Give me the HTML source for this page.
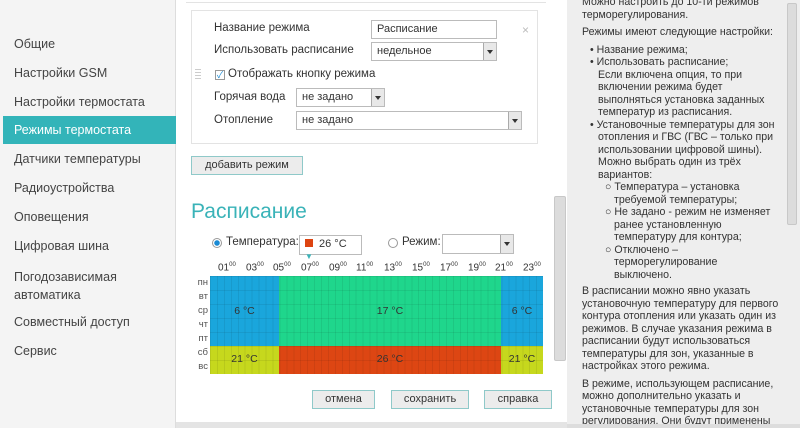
<!DOCTYPE html>
<html><head><meta charset="utf-8"><style>
*{box-sizing:border-box;margin:0;padding:0}
body{width:800px;height:428px;overflow:hidden;background:#fff;font-family:"Liberation Sans","Noto Sans CJK SC",sans-serif;color:#333;position:relative}
.nav{position:absolute;left:0;top:0;width:176px;height:428px;background:#f4f4f4;border-right:1px solid #ddd}
.nav div{position:absolute;left:14px;font-size:12.5px;color:#444}
.nav .act{left:3px;width:173px;height:28px;background:#33b4b9;color:#fff;padding:7px 11px}
.card{position:absolute;left:191px;top:10px;width:347px;height:134px;border:1px solid #e3e3e3;background:#fff}
.lbl{position:absolute;font-size:11.5px;color:#333}
.inp{position:absolute;border:1px solid #bbb;background:#fff;font-size:11px;padding:2px 5px;height:19px}
.dd{position:absolute;right:0;top:0;width:13px;height:17px;background:#e8e8e8;border-left:1px solid #aaa}
.dd:after{content:"";position:absolute;left:3px;top:7px;border:3px solid transparent;border-top:4px solid #333}
.btn{position:absolute;height:19px;border:1px solid #8fc9c9;background:#ececec;font-size:11px;text-align:center;line-height:17px;color:#333}
.side{position:absolute;left:567px;top:0;width:233px;height:428px;background:#eeeeee;font-size:10.6px;line-height:12.5px;color:#333;padding:0 0 0 15px;overflow:hidden}
.side p{margin:0 0 5px}
.cell{position:absolute;font-size:10.5px;text-align:center;color:#333}
</style></head><body>
<div class="nav">
<div style="top:37px">Общие</div>
<div style="top:66px">Настройки GSM</div>
<div style="top:95px">Настройки термостата</div>
<div class="act" style="top:116px">Режимы термостата</div>
<div style="top:152px">Датчики температуры</div>
<div style="top:181px">Радиоустройства</div>
<div style="top:210px">Оповещения</div>
<div style="top:239px">Цифровая шина</div>
<div style="top:268px;line-height:18px">Погодозависимая<br>автоматика</div>
<div style="top:315px">Совместный доступ</div>
<div style="top:344px">Сервис</div>
</div>
<div style="position:absolute;left:186px;top:0;width:360px;height:3px;border-bottom:1px solid #e3e3e3"></div>
<div class="card">
<div class="lbl" style="left:22px;top:11px">Название режима</div>
<div class="inp" style="left:179px;top:9px;width:126px">Расписание</div>
<div style="position:absolute;left:330px;top:12px;color:#bbb;font-size:12px">×</div>
<div class="lbl" style="left:22px;top:33px">Использовать расписание</div>
<div class="inp" style="left:179px;top:31px;width:126px">недельное<span class="dd"></span></div>
<div style="position:absolute;left:3px;top:58px;width:6px;height:12px;background:repeating-linear-gradient(#ccc 0 1px,transparent 1px 3px)"></div>
<div style="position:absolute;left:23px;top:59px;width:10px;height:10px;border:1px solid #999;background:#fff;color:#1a8ad4;font-size:9px;line-height:8px;text-align:center">✓</div>
<div class="lbl" style="left:36px;top:57px">Отображать кнопку режима</div>
<div class="lbl" style="left:22px;top:80px">Горячая вода</div>
<div class="inp" style="left:104px;top:77px;width:89px">не задано<span class="dd"></span></div>
<div class="lbl" style="left:22px;top:103px">Отопление</div>
<div class="inp" style="left:104px;top:100px;width:226px">не задано<span class="dd"></span></div>
</div>
<div class="btn" style="left:191px;top:156px;width:112px">добавить режим</div>
<div style="position:absolute;left:191px;top:200px;font-size:21px;color:#3ab3b8">Расписание</div>
<div style="position:absolute;left:212px;top:238px;width:10px;height:10px;border-radius:50%;border:1px solid #999;background:radial-gradient(#1a8ad4 2.5px,#fff 3px)"></div>
<div class="lbl" style="left:226px;top:236px">Температура:</div>
<div class="inp" style="left:299px;top:235px;width:63px;height:20px"><span style="display:inline-block;width:8px;height:8px;background:#dd4411;margin-right:6px"></span>26 °C <span style="color:#3ab3b8;font-size:8px">▼</span></div>
<div style="position:absolute;left:388px;top:238px;width:10px;height:10px;border-radius:50%;border:1px solid #999;background:#fff"></div>
<div class="lbl" style="left:402px;top:236px">Режим:</div>
<div class="inp" style="left:442px;top:234px;width:72px;height:20px"><span class="dd" style="height:18px"></span></div>
<div style="position:absolute;left:210px;top:262px;font-size:10px;width:340px">
<span style="position:absolute;left:8px">01<sup style="font-size:6px">00</sup></span><span style="position:absolute;left:36px">03<sup style="font-size:6px">00</sup></span><span style="position:absolute;left:63px">05<sup style="font-size:6px">00</sup></span><span style="position:absolute;left:91px">07<sup style="font-size:6px">00</sup></span><span style="position:absolute;left:119px">09<sup style="font-size:6px">00</sup></span><span style="position:absolute;left:146px">11<sup style="font-size:6px">00</sup></span><span style="position:absolute;left:174px">13<sup style="font-size:6px">00</sup></span><span style="position:absolute;left:202px">15<sup style="font-size:6px">00</sup></span><span style="position:absolute;left:230px">17<sup style="font-size:6px">00</sup></span><span style="position:absolute;left:258px">19<sup style="font-size:6px">00</sup></span><span style="position:absolute;left:285px">21<sup style="font-size:6px">00</sup></span><span style="position:absolute;left:313px">23<sup style="font-size:6px">00</sup></span>
</div>
<div style="position:absolute;left:193px;top:276px;font-size:9.5px;line-height:14px;color:#555;text-align:right;width:15px">пн<br>вт<br>ср<br>чт<br>пт<br>сб<br>вс</div>
<div style="position:absolute;left:210px;top:276px;width:333px;height:98px">
<div style="position:absolute;left:0;top:0;width:69px;height:70px;background:#1aa6dc"></div>
<div style="position:absolute;left:69px;top:0;width:222px;height:70px;background:#1fd68c"></div>
<div style="position:absolute;left:291px;top:0;width:42px;height:70px;background:#1aa6dc"></div>
<div style="position:absolute;left:0;top:70px;width:69px;height:28px;background:#c6d81d"></div>
<div style="position:absolute;left:69px;top:70px;width:222px;height:28px;background:#dd4613"></div>
<div style="position:absolute;left:291px;top:70px;width:42px;height:28px;background:#c6d81d"></div>
<div style="position:absolute;inset:0;background:repeating-linear-gradient(90deg,rgba(0,0,0,.07) 0 1px,transparent 1px 6.94px),repeating-linear-gradient(rgba(0,0,0,.07) 0 1px,transparent 1px 14px)"></div>
<div class="cell" style="left:0;top:29px;width:69px">6 °C</div>
<div class="cell" style="left:69px;top:29px;width:222px">17 °C</div>
<div class="cell" style="left:291px;top:29px;width:42px">6 °C</div>
<div class="cell" style="left:0;top:77px;width:69px">21 °C</div>
<div class="cell" style="left:69px;top:77px;width:222px">26 °C</div>
<div class="cell" style="left:291px;top:77px;width:42px">21 °C</div>
</div>
<div class="btn" style="left:312px;top:390px;width:63px">отмена</div>
<div class="btn" style="left:391px;top:390px;width:78px">сохранить</div>
<div class="btn" style="left:484px;top:390px;width:68px">справка</div>
<div style="position:absolute;left:554px;top:196px;width:12px;height:165px;background:#dcdcdc;border:1px solid #c8c8c8;border-radius:2px"></div>
<div style="position:absolute;left:176px;top:422px;width:391px;height:6px;background:#e4e4e4"></div>
<div class="side">
<p style="margin-top:-4px">Можно настроить до 10-ти режимов<br>терморегулирования.</p>
<p>Режимы имеют следующие настройки:</p>
<div style="padding-left:8px;margin-bottom:4px">
<div>• Название режима;</div>
<div>• Использовать расписание;</div>
<div style="padding-left:8px">Если включена опция, то при<br>включении режима будет<br>выполняться установка заданных<br>температур из расписания.</div>
<div>• Установочные температуры для зон</div>
<div style="padding-left:8px">отопления и ГВС (ГВС – только при<br>использовании цифровой шины).<br>Можно выбрать один из трёх<br>вариантов:</div>
<div style="padding-left:15px">○ Температура – установка<br><span style="padding-left:9px">требуемой температуры;</span><br>○ Не задано - режим не изменяет<br><span style="padding-left:9px">ранее установленную</span><br><span style="padding-left:9px">температуру для контура;</span><br>○ Отключено –<br><span style="padding-left:9px">терморегулирование</span><br><span style="padding-left:9px">выключено.</span></div>
</div>
<p>В расписании можно явно указать<br>установочную температуру для первого<br>контура отопления или указать один из<br>режимов. В случае указания режима в<br>расписании будут использоваться<br>температуры для зон, указанные в<br>настройках этого режима.</p>
<p>В режиме, использующем расписание,<br>можно дополнительно указать и<br>установочные температуры для зон<br>регулирования. Они будут применены</p>
</div>
<div style="position:absolute;left:787px;top:3px;width:10px;height:222px;background:#dcdcdc;border:1px solid #c8c8c8;border-radius:2px"></div>
<div style="position:absolute;left:567px;top:424px;width:233px;height:4px;background:#ddd"></div>
</body></html>
